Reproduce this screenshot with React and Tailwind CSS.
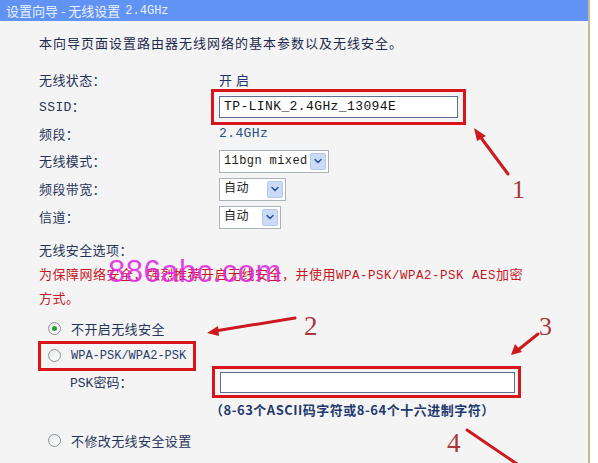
import { ChevronDown } from 'lucide-react';

const mono = "font-['Liberation_Mono','Noto_Sans_CJK_SC',monospace]";
const cjk = "font-['Noto_Sans_CJK_SC','Liberation_Sans',sans-serif]";

function Select({ value, width }) {
  return (
    <div className={`flex items-center justify-between h-[23px] bg-white border border-[#a9b1bd] pl-[4px] pr-[2px] ${width}`}>
      <span className={`${mono} whitespace-nowrap text-[12px] text-[#1b1b1b]`}>{value}</span>
      <span className="flex items-center justify-center w-[16px] h-[17px] bg-[#c9dbf7] border border-[#b5c8e8] rounded-[2px]">
        <ChevronDown size={12} strokeWidth={3} className="text-[#2c4f9a]" />
      </span>
    </div>
  );
}

function Radio({ checked }) {
  return (
    <span className="flex items-center justify-center w-[13px] h-[13px] rounded-full border border-[#8c9299] bg-gradient-to-br from-[#e4e6e8] to-white">
      {checked && <span className="w-[5px] h-[5px] rounded-full bg-[#2f9a3a]" />}
    </span>
  );
}

function Row({ label, children, h = 'h-[27px]' }) {
  return (
    <div className={`flex items-center ${h}`}>
      <div className="w-[180px] text-[#26345a]">{label}</div>
      <div className="flex items-center">{children}</div>
    </div>
  );
}

export default function App() {
  return (
    <div className={`relative w-[598px] h-[463px] overflow-hidden bg-white ${cjk} text-[13px]`}>
      <div className="w-[590px] h-full flex flex-col bg-[#f4f4f4] border-r-2 border-[#c9b78d]">
        <div className="h-[21px] flex items-center pl-[6px] bg-[#6093f4] text-[13px] text-[#eaf0fd]">
          设置向导 - 无线设置<span className={`${mono} ml-[5px] text-[12px]`}>2.4GHz</span>
        </div>

        <div className="pl-[39px] pt-[11px] flex flex-col">
          <p className="h-[22px] flex items-center text-[#1d2a4d] tracking-[1px]">
            本向导页面设置路由器无线网络的基本参数以及无线安全。
          </p>

          <div className="mt-[12px] flex flex-col tracking-[0.4px]">
            <Row label="无线状态：">
              <span className="text-[#1f3470] tracking-[4px]">开启</span>
            </Row>
            <Row label={<><span className={mono}>SSID</span>：</>}>
              <div className="relative">
                <div className={`w-[239px] h-[22px] flex items-center bg-white border border-[#5b6f95] pl-[4px] ${mono} text-[13px] text-[#111]`}>
                  TP-LINK_2.4GHz_13094E
                </div>
                <span className="absolute -left-[8px] -top-[7px] -right-[8px] -bottom-[7px] border-[3px] border-[#d8141c]" />
              </div>
            </Row>
            <Row label="频段：">
              <span className={`${mono} text-[13px] text-[#2a4f86]`}>2.4GHz</span>
            </Row>
            <Row label="无线模式：" h="h-[28px]">
              <Select value="11bgn mixed" width="w-[110px]" />
            </Row>
            <Row label="频段带宽：" h="h-[28px]">
              <Select value="自动" width="w-[67px]" />
            </Row>
            <Row label="信道：" h="h-[28px]">
              <Select value="自动" width="w-[62px]" />
            </Row>
          </div>

          <div className="mt-[5px] h-[27px] flex items-center text-[#26345a] tracking-[0.4px]">无线安全选项：</div>
          <div className="leading-[22px] text-[#c4161f] tracking-[0.5px]">
            为保障网络安全，强烈推荐开启无线安全，并使用<span className={`${mono} text-[12.5px]`}>WPA-PSK/WPA2-PSK AES</span>加密<br />方式。
          </div>

          <div className="mt-[6px] flex flex-col text-[#26345a]">
            <div className="h-[27px] flex items-center pl-[9px] gap-[10px] tracking-[0.4px]">
              <Radio checked /> 不开启无线安全
            </div>
            <div className="h-[27px] flex items-center">
              <div className="relative flex items-center pl-[9px] gap-[10px]">
                <Radio />
                <span className={`${mono} text-[12px] text-[#2a3c68]`}>WPA-PSK/WPA2-PSK</span>
                <span className="absolute -left-[1px] -top-[6px] -right-[10px] -bottom-[6px] border-[3px] border-[#d8141c]" />
              </div>
            </div>
            <div className="h-[27px] flex items-center">
              <div className="w-[181px] pl-[31px]"><span className={mono}>PSK</span>密码：</div>
              <div className="relative">
                <div className="w-[295px] h-[21px] bg-white border border-[#5b6f95]" />
                <span className="absolute -left-[8px] -top-[6px] -right-[6px] -bottom-[5px] border-[3px] border-[#d8141c]" />
              </div>
            </div>
            <div className="h-[27px] flex items-center pl-[171px] text-[13px] font-bold tracking-[0.5px] text-[#1f3a6e]">
              （8-63个ASCII码字符或8-64个十六进制字符）
            </div>
            <div className="mt-[4px] h-[27px] flex items-center pl-[9px] gap-[10px] tracking-[0.4px]">
              <Radio /> 不修改无线安全设置
            </div>
          </div>
        </div>
      </div>

      <span className="absolute left-[108px] top-[249px] font-['Liberation_Sans',sans-serif] text-[31px] text-[#e01fe0]/85 tracking-[0.5px]">
        886abc.com
      </span>

      <svg className="absolute inset-0 pointer-events-none" width="598" height="463" viewBox="0 0 598 463">
        <g stroke="#cc1a1f" strokeWidth="3" strokeLinecap="round" fill="#cc1a1f">
          <line x1="508" y1="174" x2="479" y2="135" />
          <polygon points="474,128 486,136 477,141" stroke="none" />
          <line x1="295" y1="318" x2="215" y2="331" />
          <polygon points="207,333 218,326 219,336" stroke="none" />
          <line x1="538" y1="334" x2="518" y2="350" />
          <polygon points="511,355 515,344 522,352" stroke="none" />
          <line x1="467" y1="430" x2="520" y2="466" />
        </g>
        <g fill="#a8383c" fontFamily="Liberation Serif, serif">
          <text x="512" y="198" fontSize="26">1</text>
          <text x="304" y="335" fontSize="27">2</text>
          <text x="539" y="335" fontSize="26">3</text>
          <text x="447" y="452" fontSize="27">4</text>
        </g>
      </svg>
    </div>
  );
}
